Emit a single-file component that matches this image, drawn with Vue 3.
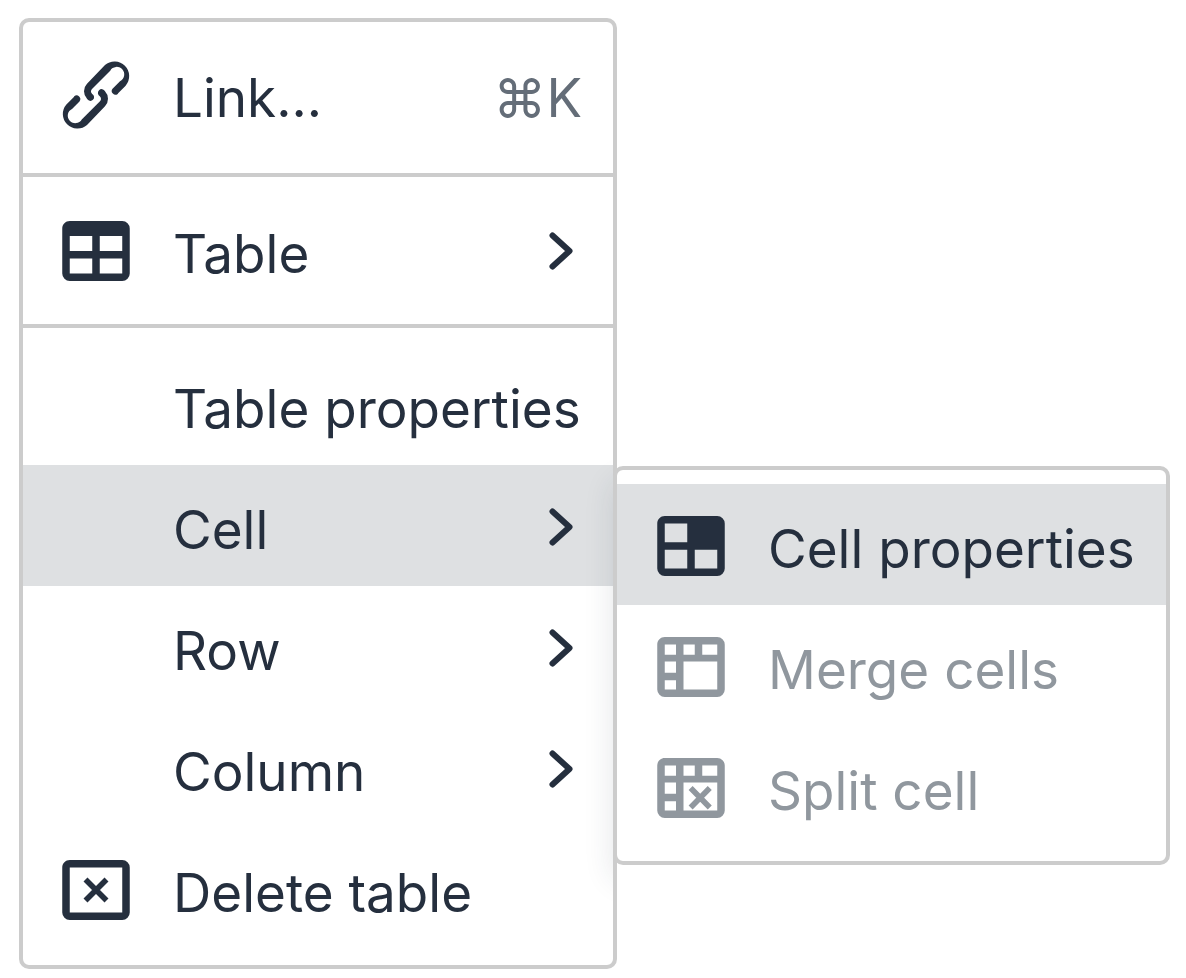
<script setup>
const tableShape = 'M5 4h14a2 2 0 0 1 2 2v12a2 2 0 0 1-2 2H5a2 2 0 0 1-2-2V6c0-1.1.9-2 2-2Z'
const mergedGrid = tableShape + 'M5 6v2.7h3V6ZM10 6v2.7h3V6ZM15 6v2.7h4V6ZM5 10.5v3h3v-3ZM5 15.5V18h3v-2.5ZM10 10.5V18h9v-7.5Z'

const icons = {
  link: 'M6.2 12.3a1 1 0 0 1 1.4 1.4l-2 2a2 2 0 1 0 2.6 2.8l4.8-4.8a1 1 0 0 0 0-1.4 1 1 0 1 1 1.4-1.3 2.9 2.9 0 0 1 0 4L9.6 20a3.9 3.9 0 0 1-5.5-5.5l2-2Zm11.6-.6a1 1 0 0 1-1.4-1.4l2-2a2 2 0 1 0-2.6-2.8L11 10.3a1 1 0 0 0 0 1.4A1 1 0 1 1 9.6 13a2.9 2.9 0 0 1 0-4L14.4 4a3.9 3.9 0 0 1 5.5 5.5l-2 2Z',
  table: tableShape + 'M5 8v4h6V8ZM13 8v4h6V8ZM5 14v4h6v-4ZM13 14v4h6v-4Z',
  cell: tableShape + 'M5 6v5h6V6ZM5 13v5h6v-5ZM13 13v5h6v-5Z',
  merge: mergedGrid,
  split: mergedGrid,
  remove: tableShape + 'M5 6v12h14V6Z',
}
const crosses = {
  split: 'm11.9 12 5.1 5.2M17 12l-5.1 5.2',
  remove: 'm9.2 9.2 5.6 5.6M14.8 9.2l-5.6 5.6',
}

const groups = [
  [{ label: 'Link...', icon: 'link', shortcut: '⌘K' }],
  [{ label: 'Table', icon: 'table', more: true }],
  [
    { label: 'Table properties' },
    {
      label: 'Cell',
      more: true,
      active: true,
      items: [
        { label: 'Cell properties', icon: 'cell', active: true },
        { label: 'Merge cells', icon: 'merge', disabled: true },
        { label: 'Split cell', icon: 'split', disabled: true },
      ],
    },
    { label: 'Row', more: true },
    { label: 'Column', more: true },
    { label: 'Delete table', icon: 'remove' },
  ],
]
</script>

<template>
  <main class="stage">
    <div class="menu" role="menu">
      <ul v-for="(group, g) in groups" :key="g" class="group" role="group">
        <li v-for="item in group" :key="item.label" class="entry" role="none">
          <button
            type="button"
            class="row"
            :class="{ active: item.active }"
            role="menuitem"
            :aria-haspopup="item.more ? 'menu' : undefined"
            :aria-expanded="item.items ? 'true' : undefined"
          >
            <span class="icon">
              <svg v-if="item.icon" viewBox="0 0 24 24" aria-hidden="true">
                <path :d="icons[item.icon]" fill="currentColor" :fill-rule="item.icon === 'link' ? 'nonzero' : 'evenodd'" />
                <path v-if="crosses[item.icon]" :d="crosses[item.icon]" fill="none" stroke="currentColor" stroke-width="1.5" />
              </svg>
            </span>
            <span class="label">{{ item.label }}</span>
            <span v-if="item.shortcut" class="shortcut">{{ item.shortcut }}</span>
            <svg v-if="item.more" class="chevron" viewBox="0 0 24 38" aria-hidden="true">
              <path d="M3.5 3.5 20.5 19 3.5 34.5" />
            </svg>
          </button>
          <ul v-if="item.items" class="submenu" role="menu" :aria-label="item.label">
            <li v-for="sub in item.items" :key="sub.label" role="none">
              <button type="button" class="row" :class="{ active: sub.active }" role="menuitem" :disabled="sub.disabled">
                <span class="icon">
                  <svg viewBox="0 0 24 24" aria-hidden="true">
                    <path :d="icons[sub.icon]" fill="currentColor" fill-rule="evenodd" />
                    <path v-if="crosses[sub.icon]" :d="crosses[sub.icon]" fill="none" stroke="currentColor" stroke-width="1.5" />
                  </svg>
                </span>
                <span class="label">{{ sub.label }}</span>
              </button>
            </li>
          </ul>
        </li>
      </ul>
    </div>
  </main>
</template>

<style>
body {
  background: #fff;
}
</style>

<style scoped>
.stage {
  padding: 18px 19px 9px;
  font-family: Inter, "Liberation Sans", sans-serif;
  font-size: 53px;
  line-height: 64px;
  color: #252f3e;
}
.menu {
  box-sizing: border-box;
  width: max-content;
  min-width: 598px;
  border: 4px solid #ccc;
  border-radius: 10px;
  background: #fff;
}
.group,
.submenu {
  margin: 0;
  padding: 0;
  list-style: none;
}
.group {
  padding: 12px 0 14px;
}
.group:first-child {
  padding: 11px 0 19px;
}
.group:last-child {
  padding: 16px 0;
}
.group + .group {
  border-top: 4px solid #ccc;
}
.entry {
  position: relative;
}
.row {
  display: flex;
  align-items: center;
  box-sizing: border-box;
  width: 100%;
  height: 121px;
  margin: 0;
  padding: 3px 31px 0 28px;
  border: 0;
  background: none;
  color: inherit;
  font: inherit;
  text-align: left;
  white-space: nowrap;
}
.row.active {
  background: #dee0e2;
}
.row:disabled {
  color: #90979e;
}
.icon {
  flex: none;
  width: 90px;
  height: 90px;
  margin-right: 32px;
}
.icon svg {
  display: block;
  width: 100%;
  height: 100%;
}
.label,
.shortcut {
  padding-top: 5px;
}
.label {
  flex: 1;
}
.shortcut {
  color: #646d78;
}
.chevron {
  flex: none;
  width: 24px;
  height: 38px;
  margin-right: 9px;
  fill: none;
  stroke: currentColor;
  stroke-width: 6;
  stroke-linecap: round;
  stroke-linejoin: round;
}
.submenu {
  position: absolute;
  z-index: 1;
  top: 1px;
  left: 100%;
  box-sizing: border-box;
  width: max-content;
  min-width: 557px;
  padding: 14px 0;
  border: 4px solid #ccc;
  border-radius: 10px;
  background: #fff;
}
.submenu .row {
  padding-left: 29px;
}
/* The shadow falls on the parent menu only. */
.submenu::before {
  content: "";
  position: absolute;
  inset: -4px;
  border-radius: 10px;
  box-shadow: 0 15px 30px rgba(34, 47, 62, 0.12);
  clip-path: inset(-30px 100% -60px -60px);
  pointer-events: none;
}
</style>
